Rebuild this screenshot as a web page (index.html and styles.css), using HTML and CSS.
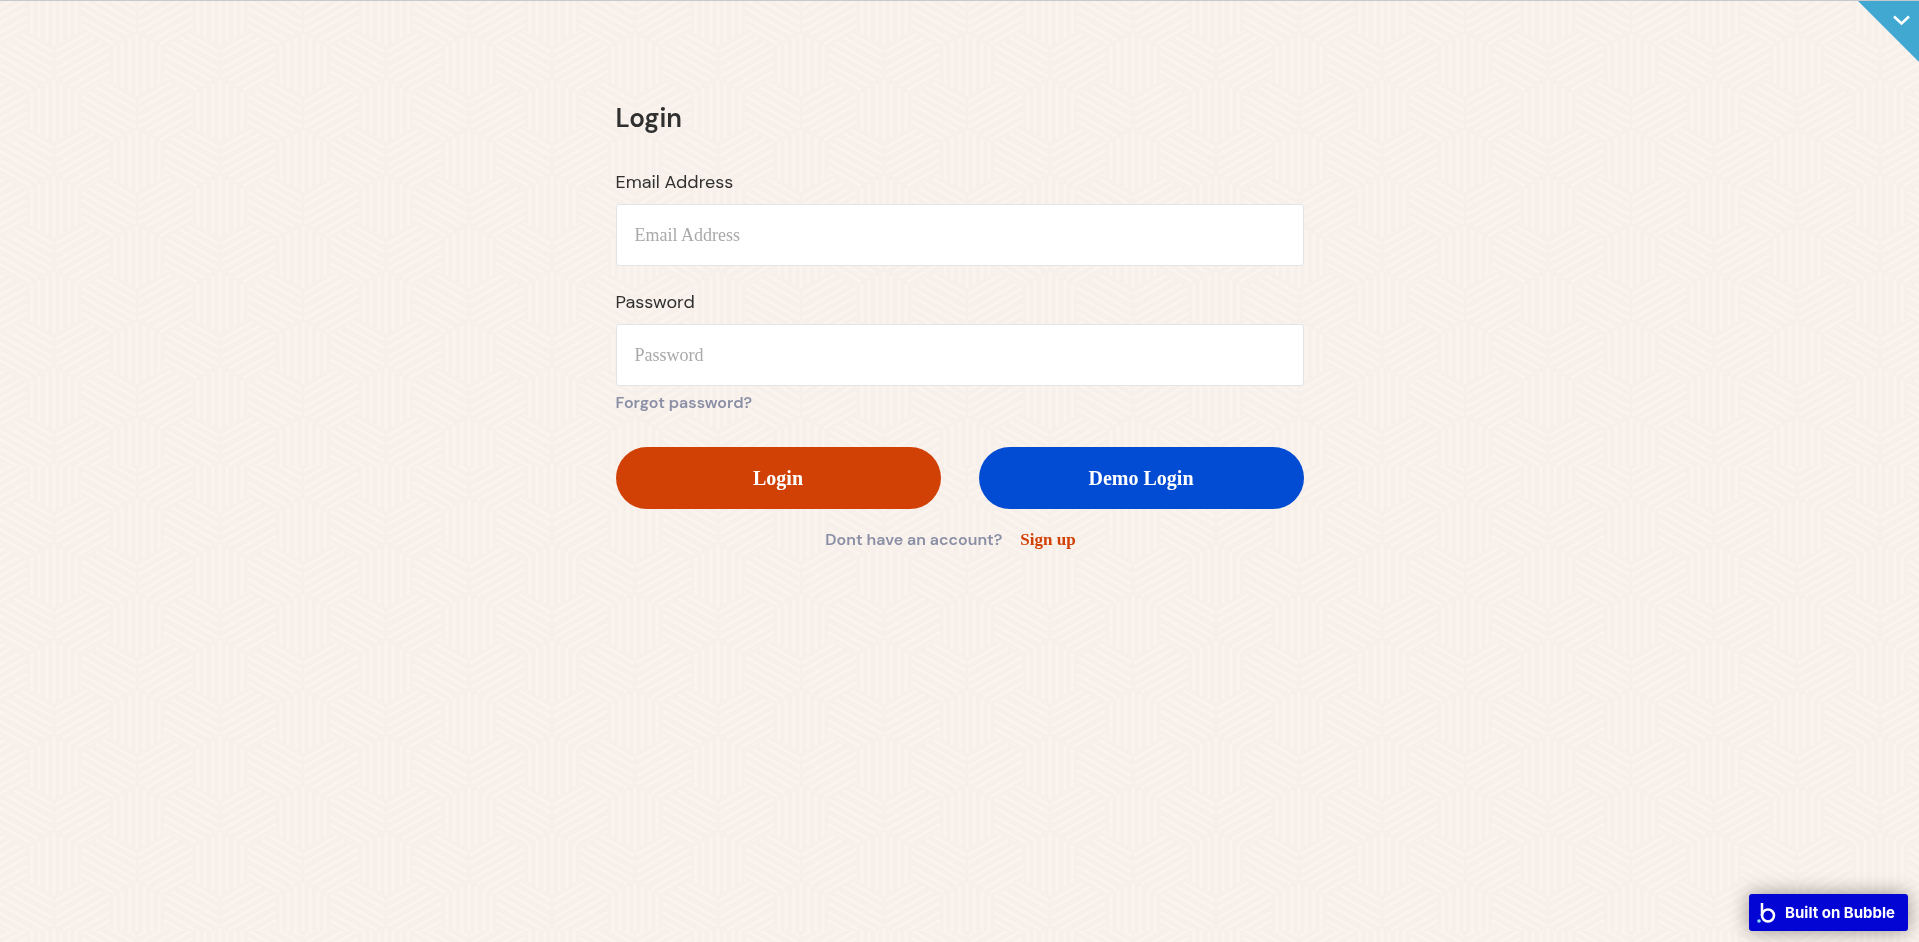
FILE: index.html
```html
<!DOCTYPE html>
<html lang="en">
  <head>
    <meta charset="utf-8" />
    <title>Login</title>
    <meta name="viewport" content="width=device-width, initial-scale=1" />
    <link rel="stylesheet" href="styles.css">
  </head>
  <body>
    <!-- woven background -->
    <svg class="page-pattern" aria-hidden="true">
      <defs>
        <g id="arm">
          <path d="M-26 15L0 0L26 15V51L0 66L-26 51Z" fill="#f7efe9" />
          <path d="M-22 14V52M-15 10V56M-7 6V60M0 2V64M7 6V60M15 10V56M22 14V52" stroke="#fbf3ed" stroke-width="3" fill="none" />
        </g>
        <g id="star">
          <use href="#arm" />
          <use href="#arm" transform="rotate(120)" />
          <use href="#arm" transform="rotate(240)" />
        </g>
        <pattern id="weave" width="166" height="96" patternUnits="userSpaceOnUse">
          <rect width="166" height="96" fill="#f9f1eb" />
          <use href="#star" x="54" y="-19" />
          <use href="#star" x="54" y="77" />
          <use href="#star" x="137" y="-65" />
          <use href="#star" x="137" y="31" />
          <use href="#star" x="137" y="127" />
          <use href="#star" x="-29" y="31" />
          <use href="#star" x="-29" y="127" />
          <use href="#star" x="220" y="77" />
          <use href="#star" x="220" y="-19" />
        </pattern>
        <pattern id="tile" width="1992" height="465" patternUnits="userSpaceOnUse">
          <rect width="1992" height="465" fill="url(#weave)" />
        </pattern>
      </defs>
      <rect width="100%" height="100%" fill="url(#tile)" />
    </svg>

    <button class="corner-menu" aria-label="Open menu">
      <svg width="61" height="61" viewBox="0 0 61 61">
        <path d="M0 0H61V61Z" fill="#41a9d1" />
        <path d="M36 15.500L43.500 22.500L51 15.500" fill="none" stroke="#fff" stroke-width="2.500" />
      </svg>
    </button>

    <main class="login-page">
      <form class="login-form">
        <h1>Login</h1>
        <label for="email">Email Address</label>
        <input id="email" type="email" placeholder="Email Address" />
        <label for="password">Password</label>
        <input id="password" type="password" placeholder="Password" />
        <a class="forgot" href="#">Forgot password?</a>
        <div class="buttons">
          <button class="btn btn-login" type="submit">Login</button>
          <button class="btn btn-demo" type="button">Demo Login</button>
        </div>
        <p class="signup">
          <span>Dont have an account?</span>
          <a href="#">Sign up</a>
        </p>
      </form>
    </main>

    <a class="bubble-badge" href="#">
      <svg width="19" height="20" viewBox="0 0 19 20">
        <path d="M5 0V13" stroke="#fff" stroke-width="2.500" fill="none" />
        <circle cx="11" cy="12.500" r="6" stroke="#fff" stroke-width="2.500" fill="none" />
        <circle cx="2" cy="18" r="1.800" fill="#8fdcf5" />
      </svg>
      <span>Built on Bubble</span>
    </a>
  </body>
</html>
```
FILE: styles.css
```css
* {
  box-sizing: border-box;
}
body {
  margin: 0;
  min-height: 100vh;
  background: #faf1ec;
  border-top: 1px solid #c8c9cd;
  font-family: "DM Sans", "Open Sans", sans-serif;
  color: #303030;
}
.page-pattern {
  position: fixed;
  left: 0;
  top: 1px;
  width: 100%;
  height: 100%;
  z-index: -1;
}
.corner-menu {
  position: absolute;
  top: 1px;
  right: 0;
  padding: 0;
  border: 0;
  background: none;
  cursor: pointer;
}
.corner-menu svg {
  display: block;
}
.login-page {
  padding: 97px 16px 32px;
}
.login-form {
  display: flex;
  flex-direction: column;
  max-width: 688px;
  margin: 0 auto;
}
h1 {
  margin: 0 0 32px;
  font-size: 26px;
  line-height: 40px;
  font-weight: 600;
}
label {
  font-size: 18px;
  line-height: 24px;
  margin-bottom: 10px;
}
input {
  height: 62px;
  padding: 0 18px;
  margin-bottom: 24px;
  border: 1px solid #e2e4e6;
  border-radius: 3px;
  background: #fff;
  font-family: "Liberation Serif", serif;
  font-size: 18px;
}
input::placeholder {
  color: #a9a9a9;
}
#password {
  margin-bottom: 5px;
}
.forgot {
  align-self: flex-start;
  color: #8a8fa6;
  font-size: 16px;
  line-height: 24px;
  font-weight: 600;
  text-decoration: none;
}
.buttons {
  display: grid;
  grid-template-columns: 1fr 1fr;
  gap: 38px;
  margin-top: 32px;
}
.btn {
  height: 62px;
  border: 0;
  border-radius: 31px;
  color: #fff;
  font-family: "Liberation Serif", serif;
  font-size: 20px;
  font-weight: 700;
  cursor: pointer;
}
.btn-login {
  background: #d14005;
}
.btn-demo {
  background: #024bd3;
}
.signup {
  display: flex;
  justify-content: center;
  gap: 18px;
  margin: 19px 0 0;
  padding-right: 18px;
  font-size: 16px;
  line-height: 24px;
  font-weight: 600;
  color: #8a8fa6;
}
.signup a {
  color: #d14005;
  font-family: "Liberation Serif", serif;
  font-size: 17px;
  font-weight: 700;
  text-decoration: none;
}
.bubble-badge {
  position: fixed;
  right: 11px;
  bottom: 11px;
  display: flex;
  align-items: center;
  gap: 9px;
  height: 37px;
  padding: 0 13px 0 8px;
  border-radius: 3px;
  background: #0205d3;
  box-shadow: 0 0 20px rgba(0, 0, 0, 0.4);
  color: #fff;
  font-family: Inter, sans-serif;
  font-size: 15px;
  font-weight: 700;
  text-decoration: none;
}
```
